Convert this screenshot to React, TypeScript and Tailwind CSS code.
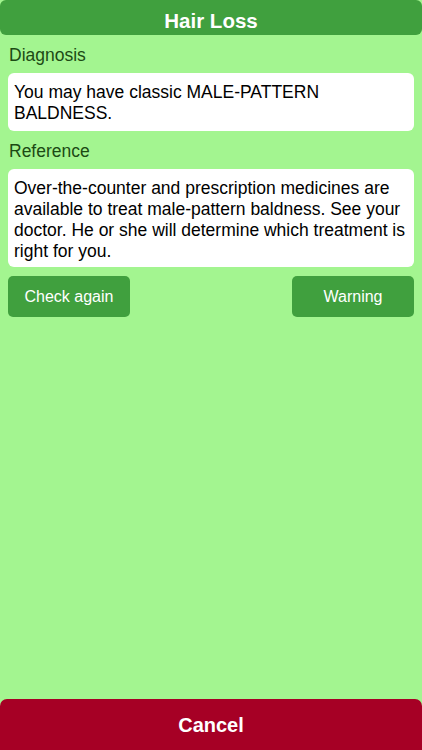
export default function App() {
  return (
    <div
      className="w-[422px] h-[750px] bg-[#a3f590] flex flex-col"
      style={{ fontFamily: '"Liberation Sans", Arial, sans-serif' }}
    >
      <div className="h-[35px] bg-[#40a03e] rounded-[6px] flex items-center justify-center shrink-0 pt-[6px]">
        <h1 className="text-white font-bold text-[20.5px] leading-[24px]">Hair Loss</h1>
      </div>

      <div className="flex flex-col px-[8px] flex-1">
        <p className="text-[#1c4a14] text-[17.5px] leading-[20px] mt-[10px] pl-[1px]">Diagnosis</p>
        <div className="bg-white rounded-[6px] mt-[8px] h-[58px] px-[6px] pt-[9px] text-[17.5px] leading-[21px] text-black">
          You may have classic MALE-PATTERN BALDNESS.
        </div>

        <p className="text-[#1c4a14] text-[17.5px] leading-[20px] mt-[10px] pl-[1px]">Reference</p>
        <div className="bg-white rounded-[6px] mt-[8px] h-[98px] px-[6px] pt-[9px] text-[17.5px] leading-[21px] text-black">
          Over-the-counter and prescription medicines are available to treat male-pattern baldness. See your doctor. He or she will determine which treatment is right for you.
        </div>

        <div className="flex justify-between mt-[9px]">
          <button className="w-[122px] h-[41px] bg-[#40a03e] rounded-[5px] text-white text-[16px]">
            Check again
          </button>
          <button className="w-[122px] h-[41px] bg-[#40a03e] rounded-[5px] text-white text-[16px]">
            Warning
          </button>
        </div>
      </div>

      <button className="h-[51px] bg-[#a60025] rounded-t-[7px] text-white font-bold text-[20px] shrink-0">
        Cancel
      </button>
    </div>
  );
}
